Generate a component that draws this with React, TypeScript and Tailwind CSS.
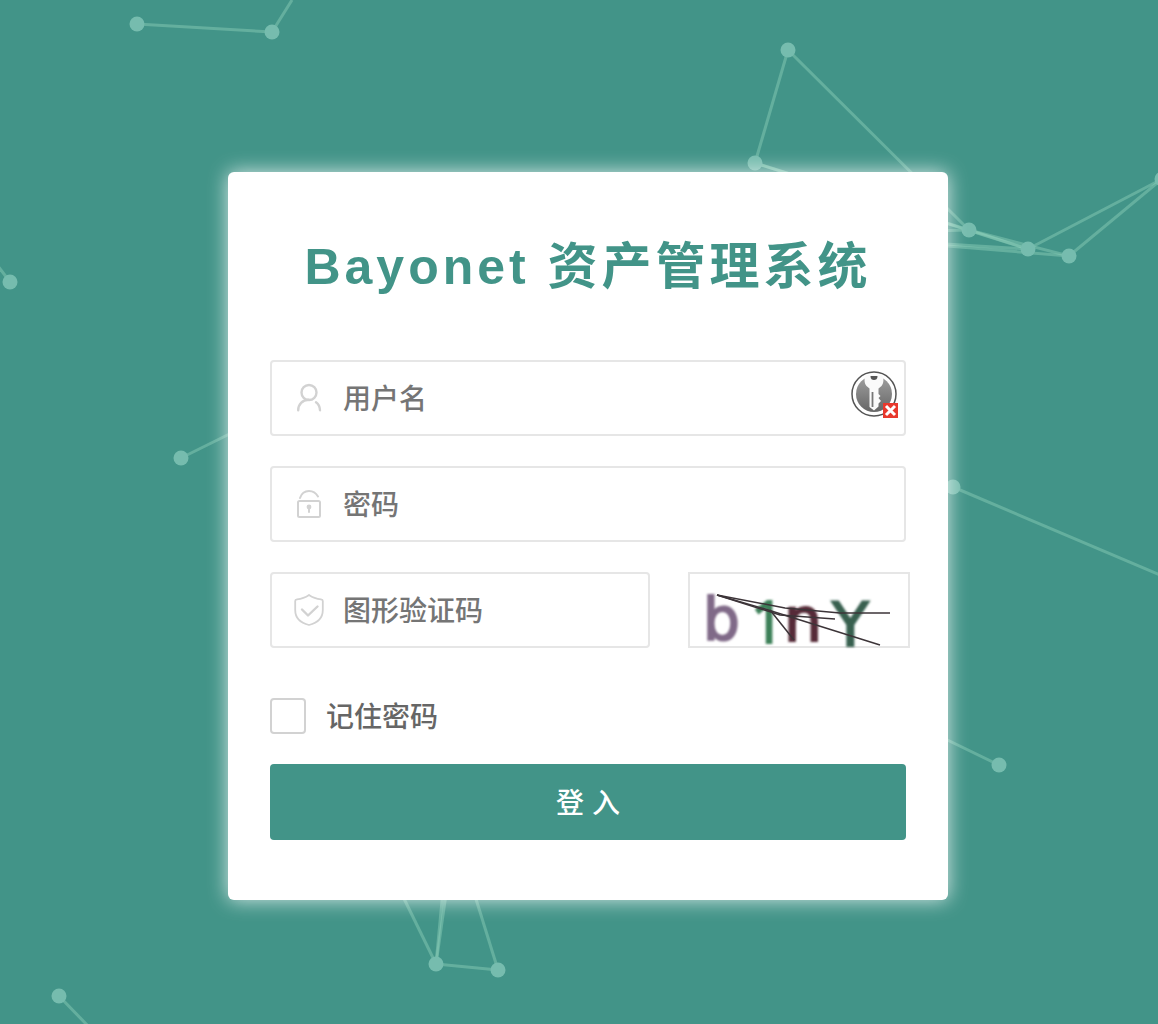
import type { ReactNode } from "react";

const nodes = [
  [137, 24], [272, 32], [788, 50], [755, 163], [969, 230], [1028, 249],
  [1069, 256], [1162, 179], [10, 282], [181, 458], [953, 487], [999, 765],
  [436, 964], [498, 970], [59, 996],
];

const links = [
  [137, 24, 272, 32], [272, 32, 292, 0], [788, 50, 755, 163], [788, 50, 969, 230],
  [755, 163, 969, 230], [755, 163, 1028, 249], [969, 230, 800, 234],
  [969, 230, 1028, 249], [969, 230, 1069, 256], [1028, 249, 800, 235],
  [1069, 256, 800, 234], [1028, 249, 1162, 179], [1069, 256, 1162, 179],
  [10, 282, -2, 266], [181, 458, 300, 399], [953, 487, 1160, 575],
  [999, 765, 900, 717], [436, 964, 390, 870], [436, 964, 444, 880],
  [436, 964, 448, 880], [436, 964, 498, 970], [498, 970, 467, 870],
  [59, 996, 90, 1028],
];

function Network() {
  return (
    <svg
      className="pointer-events-none absolute inset-0 h-full w-full"
      viewBox="0 0 1158 1024"
      preserveAspectRatio="xMidYMid slice"
      aria-hidden="true"
    >
      <g stroke="#8fd0bb" strokeOpacity="0.45" strokeWidth="3">
        {links.map(([x1, y1, x2, y2], i) => (
          <line key={i} x1={x1} y1={y1} x2={x2} y2={y2} />
        ))}
      </g>
      <g fill="#76bcae">
        {nodes.map(([cx, cy], i) => (
          <circle key={i} cx={cx} cy={cy} r="7.5" />
        ))}
      </g>
    </svg>
  );
}

function UserIcon() {
  return (
    <svg className="size-8" viewBox="0 0 32 32" fill="none" stroke="#d2d2d2" strokeWidth="2.4" strokeLinecap="round" aria-hidden="true">
      <circle cx="16" cy="10.5" r="7.5" />
      <path d="M5.200 28.200C5.200 22.500 9.500 18 15.500 17.800" />
      <path d="M23 20.200C25.500 22 26.900 25 27 28.200" />
    </svg>
  );
}

function LockIcon() {
  return (
    <svg className="size-8" viewBox="0 0 32 32" fill="none" stroke="#d2d2d2" strokeWidth="2" strokeLinecap="round" aria-hidden="true">
      <rect x="5" y="13" width="22" height="16" rx="1.5" />
      <path d="M7 10C8.500 5.500 12 3 16 3S23 5 25 8.500" />
      <circle cx="16" cy="19" r="2.4" fill="#d2d2d2" stroke="none" />
      <path d="M16 20V24" />
    </svg>
  );
}

function ShieldIcon() {
  return (
    <svg className="size-8" viewBox="0 0 32 32" fill="none" stroke="#d2d2d2" strokeWidth="1.8" strokeLinecap="round" strokeLinejoin="round" aria-hidden="true">
      <path d="M16 1C12.500 3.500 8 5 4 5.300C2.800 5.400 2.200 6 2.200 7V16C2.200 24 8 29 16 31C24 29 29.800 24 29.800 16V7C29.800 6 29.200 5.400 28 5.300C24 5 19.500 3.500 16 1Z" />
      <path d="M9 15.500L15 21.500L24.500 12.500" strokeWidth="2.4" />
    </svg>
  );
}

function KeyBadge() {
  return (
    <svg className="mt-2 mr-1.5 h-[50px] w-12 shrink-0 self-start" viewBox="0 0 48 50" role="img" aria-label="密码管理器">
      <defs>
        <linearGradient id="disc" x1="0" y1="0" x2="0" y2="1">
          <stop offset="0" stopColor="#a0a0a0" />
          <stop offset="1" stopColor="#666" />
        </linearGradient>
      </defs>
      <circle cx="24" cy="24" r="22" fill="#fff" stroke="#555" strokeWidth="1.5" />
      <circle cx="24" cy="24" r="18" fill="url(#disc)" />
      <path
        fill="#fafafa"
        d="M16 5L32 5C34 8 34 13 31.500 16L28.500 18.500V24L30.500 26L28.500 28L31 31L28.500 33.500V36.500L24 40.500L19.500 37V18.500L16.500 16C14 13 14 8 16 5Z"
      />
      <path d="M20.500 6H27.500C27.500 9 26 10 24 10S20.500 9 20.500 6Z" fill="#555" />
      <path d="M22.500 22V37" stroke="#777" strokeWidth="1.8" />
      <rect x="33" y="33" width="15" height="15" fill="#e8392d" />
      <path d="M36 36L45 45M45 36L36 45" stroke="#fff" strokeWidth="3" />
    </svg>
  );
}

function Captcha() {
  return (
    <svg className="h-[72px] w-full overflow-visible" viewBox="0 0 218 72" role="img" aria-label="b1nY">
      <defs>
        <filter id="soft">
          <feGaussianBlur stdDeviation="0.8" />
        </filter>
      </defs>
      <g fontFamily='"DejaVu Sans", sans-serif' strokeWidth="2" filter="url(#soft)">
        <text x="13" y="66" fontSize="58" fill="#806a88" stroke="#806a88">b</text>
        <text x="61" y="69" fontSize="58" fontFamily='"Open Sans", sans-serif' fill="#3c8058" stroke="#3c8058">1</text>
        <text x="94" y="67" fontSize="60" fill="#562c38" stroke="#562c38">n</text>
        <text x="142" y="72" fontSize="60" fill="#386050" stroke="#386050">Y</text>
      </g>
      <g fill="none" stroke="#3c3438" strokeWidth="1.5">
        <path d="M27 21L95 34L150 39L200 39" />
        <path d="M27 21L90 41L145 45" />
        <path d="M27 21L75 35L190 71" />
        <path d="M80 36L104 66" />
      </g>
    </svg>
  );
}

type FieldProps = {
  id: string;
  type?: string;
  label: string;
  icon: ReactNode;
  className?: string;
  children?: ReactNode;
};

function Field({ id, type = "text", label, icon, className = "", children }: FieldProps) {
  return (
    <div className={`flex h-[76px] items-center rounded border-2 border-[#e6e6e6] bg-white ${className}`}>
      <label htmlFor={id} aria-label={label} className="shrink-0 pr-[18px] pl-[21px]">
        {icon}
      </label>
      <input
        id={id}
        type={type}
        placeholder={label}
        className="h-full w-full min-w-0 flex-1 bg-transparent pt-[3px] text-[28px] font-medium text-[#333] outline-none placeholder:text-[#757575]"
      />
      {children}
    </div>
  );
}

export default function App() {
  return (
    <main className="relative flex min-h-screen items-center justify-center overflow-hidden bg-[#429488] pt-12 pl-[18px] font-['Liberation_Sans','Noto_Sans_CJK_SC',sans-serif]">
      <Network />
      <form
        className="relative w-full max-w-[720px] rounded-md bg-white px-[42px] pt-[60px] pb-[60px] shadow-[0_0_20px_rgba(255,255,255,0.8)]"
        onSubmit={(e) => e.preventDefault()}
      >
        <h1 className="text-center text-[50px] leading-[70px] font-bold tracking-[4px] text-[#429488]">
          Bayonet 资产管理系统
        </h1>
        <div className="mt-[58px] flex flex-col gap-[30px]">
          <Field id="username" label="用户名" icon={<UserIcon />}>
            <KeyBadge />
          </Field>
          <Field id="password" type="password" label="密码" icon={<LockIcon />} />
          <div className="-mr-1 flex justify-between gap-[38px]">
            <Field id="captcha" label="图形验证码" icon={<ShieldIcon />} className="min-w-0 flex-1" />
            <button type="button" className="h-[76px] w-[222px] shrink-0 border-2 border-[#e6e6e6] bg-white">
              <Captcha />
            </button>
          </div>
        </div>
        <div className="mt-[50px] flex h-9 items-center gap-5">
          <input
            id="remember"
            type="checkbox"
            className="size-9 appearance-none rounded border-2 border-[#d2d2d2] bg-white checked:bg-[#429488]"
          />
          <label htmlFor="remember" className="pt-[3px] text-[28px] leading-9 font-medium text-[#666]">
            记住密码
          </label>
        </div>
        <button type="submit" className="mt-[30px] h-[76px] w-full rounded bg-[#429488] pt-[3px] text-[28px] font-medium text-white">
          登 入
        </button>
      </form>
    </main>
  );
}
